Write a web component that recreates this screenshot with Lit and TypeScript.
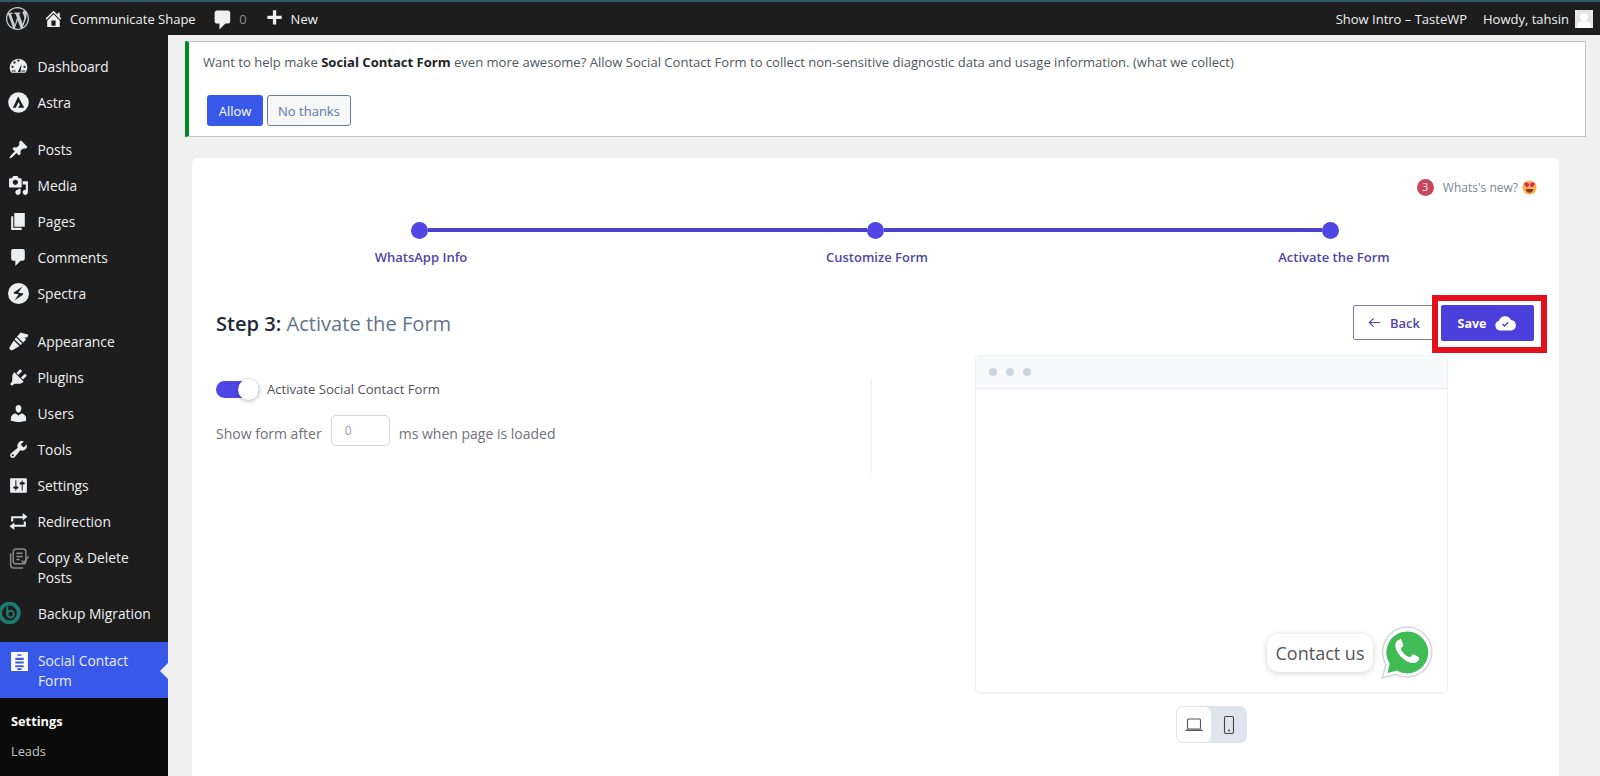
import { LitElement, html, css, svg } from "lit";
import { customElement } from "lit/decorators.js";

const W = "#eceff1";
const D = "#1d1d1d";
const icons: Record<string, any> = {
  dash: svg`<path d="M10 2.5a8.400 8.400 0 0 0-8.400 8.400c0 1.900.65 3.700 1.800 5.100h13.200a8.300 8.300 0 0 0 1.800-5.100A8.400 8.400 0 0 0 10 2.500z" fill="${W}"/><circle cx="4.300" cy="10.300" r="1.100" fill="${D}"/><circle cx="15.700" cy="10.300" r="1.100" fill="${D}"/><circle cx="6.200" cy="6.200" r="1.100" fill="${D}"/><circle cx="10" cy="4.400" r="1.100" fill="${D}"/><path d="M9.300 15.200 13 7.500l-1.200 8z" fill="${D}"/><path d="M3.700 14.300h3.600M12.800 14.300h3.500" stroke="${D}" stroke-width="1"/>`,
  astra: svg`<circle cx="10" cy="10" r="9.800" fill="${W}"/><path d="M9.700 4.300 4.600 15h2.800L10 9.600l1.400 2.800-1.900 2.600h6z" fill="${D}"/>`,
  pin: svg`<path d="M10.440 3.020l1.820-1.820 6.360 6.350-1.830 1.820c-1.050-.68-2.480-.57-3.410.36l-.75.75c-.92.93-1.040 2.350-.35 3.400l-1.830 1.820-2.410-2.410-2.800 2.790c-.42.42-3.380 2.710-3.800 2.290s1.860-3.390 2.280-3.810l2.790-2.790L4.100 9.360l1.830-1.820c1.050.69 2.480.57 3.400-.36l.75-.75c.93-.92 1.050-2.350.36-3.410z" fill="${W}"/>`,
  media: svg`<path d="M13 11V4c0-.55-.45-1-1-1h-1.670L9 1H5L3.670 3H2c-.55 0-1 .45-1 1v7c0 .55.45 1 1 1h10c.55 0 1-.45 1-1zM7 4.500c1.380 0 2.500 1.120 2.500 2.500S8.380 9.500 7 9.500 4.500 8.380 4.500 7 5.620 4.500 7 4.500zM14 6h5v10.500c0 1.380-1.120 2.500-2.500 2.500S14 17.880 14 16.500s1.120-2.500 2.500-2.500c.17 0 .34.02.5.05V9h-3V6zm-4 8.050V13h2v3.500c0 1.380-1.120 2.500-2.500 2.500S7 17.880 7 16.500 8.120 14 9.500 14c.17 0 .34.02.5.05z" fill="${W}"/>`,
  pages: svg`<path d="M6 15V2h10v13H6zm-1 1h8v2H3V5h2v11z" fill="${W}"/>`,
  comment: svg`<path d="M5 2h9c1.100 0 2 .9 2 2v7c0 1.100-.9 2-2 2h-2l-5 5v-5H5c-1.100 0-2-.9-2-2V4c0-1.100.9-2 2-2z" fill="${W}"/>`,
  spectra: svg`<circle cx="10" cy="10" r="10" fill="${W}"/><path d="M13.600 3.600 5.800 8.800c-.6.5-.4 1.300.3 1.400l4.100.6-3.800 5.600 7.800-5.200c.6-.5.4-1.300-.3-1.400l-4.100-.6z" fill="${D}"/>`,
  brush: svg`<path d="M19.500 3.500 12 1.500 8.500 5.500l6 5.500 2.800-3-1.600-2.200 2.500.7zM7.700 6.300 6.300 8l5.700 5.300 1.600-1.500zM5.500 9 1.500 15.500c-.8 1.800 1.300 3.600 3 2.500L11 14.200z" fill="${W}"/>`,
  plug: svg`<path d="M13.110 4.360L9.870 7.600 8 5.730l3.240-3.240c.35-.34 1.050-.2 1.560.32.52.51.66 1.210.31 1.550zm-8 1.770l.91-1.120 9.010 9.010-1.190.84c-.71.71-2.630 1.160-3.820 1.160H6.140L4.900 17.260c-.59.59-1.540.59-2.120 0-.59-.58-.59-1.530 0-2.120l1.240-1.240v-3.880c0-1.130.4-3.190 1.090-3.890zm7.260 3.970l3.240-3.240c.34-.35 1.040-.21 1.550.31.52.51.66 1.210.31 1.560l-3.240 3.250z" fill="${W}"/>`,
  user: svg`<path d="M10 9.250c-2.270 0-2.730-3.440-2.730-3.440C7 4.020 7.820 2 9.970 2c2.160 0 2.980 2.020 2.710 3.810 0 0-.41 3.440-2.680 3.440zm0 2.570L12.720 10c2.390 0 4.520 2.330 4.520 4.530v2.490s-3.650 1.130-7.240 1.130c-3.650 0-7.240-1.130-7.240-1.130v-2.490c0-2.250 1.940-4.480 4.470-4.480z" fill="${W}"/>`,
  wrench: svg`<path d="M16.680 9.770c-1.340 1.340-3.300 1.670-4.950.99l-5.410 6.520c-.99.99-2.590.99-3.570 0-.99-.98-.99-2.580 0-3.570l6.520-5.420c-.68-1.650-.35-3.610.99-4.950 1.280-1.280 3.120-1.620 4.720-1.060l-2.890 2.890 2.820 2.820 2.860-2.870c.53 1.580.18 3.390-1.090 4.650zM3.810 16.210c.4.39 1.040.39 1.430 0 .4-.4.4-1.040 0-1.430-.39-.4-1.030-.4-1.430 0-.39.39-.39 1.030 0 1.430z" fill="${W}"/>`,
  settings: svg`<path d="M18 16V4c0-.55-.45-1-1-1H3c-.55 0-1 .45-1 1v12c0 .55.45 1 1 1h14c.55 0 1-.45 1-1zM8 11h1c.55 0 1 .45 1 1s-.45 1-1 1H8v1.500c0 .28-.22.5-.5.5s-.5-.22-.5-.5V13H6c-.55 0-1-.45-1-1s.45-1 1-1h1V5.500c0-.28.22-.5.5-.5s.5.22.5.5V11zm5-2h-1c-.55 0-1-.45-1-1s.45-1 1-1h1V5.500c0-.28.22-.5.5-.5s.5.22.5.5V7h1c.55 0 1 .45 1 1s-.45 1-1 1h-1v5.500c0 .28-.22.5-.5.5s-.5-.22-.5-.5V9z" fill="${W}"/>`,
  redirect: svg`<path d="M3 5h11V2l4.500 3.500L14 9V7H5v3H3zM17 15H6v3l-4.500-3.500L6 11v2h9v-3h2z" fill="${W}"/>`,
  copy: svg`<g fill="none" stroke="#8a8a8a" stroke-width="1.400"><rect x="5" y="1" width="12" height="14" rx="2.500"/><path d="M2.500 5v11c0 2 1.500 3 3 3h9M8 5h6M8 8h6M8 11h3"/><path d="m13 12 2 2 4.500-6"/></g>`,
  backup: svg`<circle cx="9.500" cy="10" r="8.500" fill="none" stroke="#1f7a73" stroke-width="3.500"/><circle cx="10.500" cy="11" r="3" fill="none" stroke="#1f7a73" stroke-width="1.800"/><path d="M7.500 4v7" stroke="#1f7a73" stroke-width="1.800"/>`,
  form: svg`<path fill-rule="evenodd" d="M2 1h16v18H2zM8 3v1.500h4V3zM6 6.500v2h8v-2zM6 10v2h8v-2zM6 13.500v2h8v-2zM8 16.500V18h4v-1.500z" fill="#fff"/>`,
};
const ic = (k: string) => html`<svg class="ic" viewBox="0 0 20 20">${icons[k]}</svg>`;

const WP = "M20 10c0-5.510-4.490-10-10-10C4.480 0 0 4.490 0 10c0 5.520 4.480 10 10 10 5.510 0 10-4.480 10-10zM7.780 15.370L4.370 6.220c.55-.02 1.170-.08 1.170-.08.5-.06.44-1.130-.06-1.110 0 0-1.450.11-2.370.11-.18 0-.37 0-.58-.01C4.120 2.690 6.890 1.050 10 1.050c2.320 0 4.430.9 6.010 2.350-.67-.1-1.620.38-1.620 1.550 0 .72.44 1.330.9 2.070.35.62.55 1.380.55 2.490 0 1.490-1.410 5.020-1.410 5.020l-3.050-8.410c.54-.02.83-.17.83-.17.5-.05.44-1.250-.06-1.220 0 0-1.450.12-2.390.12-.87 0-2.330-.12-2.330-.12-.5-.03-.56 1.200-.06 1.220l.92.08 1.260 3.410zM17.410 10c.24-.64.74-1.870.43-4.250.7 1.290 1.050 2.710 1.050 4.250 0 3.290-1.730 6.240-4.400 7.780.97-2.590 1.940-5.200 2.920-7.780zM6.100 18.090C3.120 16.640 1.110 13.530 1.110 10c0-1.300.23-2.480.72-3.590C3.250 10.300 4.670 14.200 6.100 18.090zm4.030-6.630l2.580 6.980c-.85.3-1.790.46-2.710.46-.79 0-1.560-.1-2.290-.33.8-2.370 1.610-4.740 2.420-7.110z";

@customElement("app-root")
export class AppRoot extends LitElement {
  static styles = css`
    :host { display: block; width: 1600px; height: 776px; overflow: hidden; background: #f0f0f1; font-family: "Open Sans", "Noto Sans", sans-serif; color: #3c434a; }
    * { box-sizing: border-box; }
    .shell { display: flex; flex-direction: column; height: 776px; }
    .bar { flex: none; height: 35px; background: #1d1d1d; border-top: 2px solid #2d5c66; display: flex; align-items: center; color: #eef0f1; font-size: 13px; padding: 0 7px 0 6px; }
    .bar > * { flex: none; }
    .bar .wp { width: 23px; height: 23px; margin-right: 14px; }
    .bar .home { width: 21px; height: 21px; margin-right: 6px; }
    .bar .cm { width: 24px; height: 24px; margin-left: 15.5px; margin-right: 4px; margin-top: 2px; }
    .bar .zero { color: #8b8f92; margin-right: 16px; }
    .bar .plus { width: 22px; height: 22px; margin-right: 6px; }
    .sp { flex: 1 !important; }
    .bar .intro { margin-right: 16px; }
    .avatar { width: 18px; height: 18px; background: #e4e4e4; margin-left: 6px; position: relative; overflow: hidden; }
    .avatar i { position: absolute; left: 5px; top: 3px; width: 8px; height: 8px; border-radius: 50%; background: #fff; }
    .avatar b { position: absolute; left: 2px; top: 11px; width: 14px; height: 10px; border-radius: 6px 6px 0 0; background: #fff; }
    .main { flex: 1; display: flex; min-height: 0; }
    .side { flex: none; width: 168px; background: #1d1d1d; color: #f0f0f1; font-size: 13.8px; display: flex; flex-direction: column; padding-top: 13px; overflow: hidden; }
    .it { display: flex; align-items: center; height: 36px; padding-left: 8px; flex: none; }
    .it .ic { width: 21px; height: 21px; flex: none; margin-right: 8.5px; }
    .it.two { height: 56px; line-height: 19.5px; align-items: flex-start; padding-top: 9px; }
    .it.bk { padding-left: 0; }
    .it.bk .ic { margin-right: 17px; margin-left: -1px; width: 22px; height: 22px; }
    .gap { height: 12px; flex: none; }
    .gap.first { height: 11px; }
    .it.cur { background: #3858e9; color: #e8ecff; height: 56px; margin-top: 11px; position: relative; align-items: flex-start; padding-top: 9px; line-height: 20px; padding-left: 9px; }
    .it.cur .ic { margin-right: 8px; }
    .it.cur::after { content: ""; position: absolute; right: 0; top: 21px; border: 8px solid transparent; border-right-color: #f0f0f1; border-left: 0; }
    .sub { flex: 1; background: #0b0b0b; padding-top: 14px; font-size: 12.8px; }
    .sub div { padding-left: 11px; height: 30px; line-height: 18px; color: #c3c4c7; }
    .sub .on { color: #fff; font-weight: 700; }
    .content { flex: 1; min-width: 0; padding: 6px 0 0 17px; position: relative; }
    .notice { height: 96px; width: 1401px; background: #fff; border: 1px solid #c3c4c7; border-left: 4px solid #008a20; padding: 10px 14px; font-size: 13.06px; color: #50575e; }
    .notice b { color: #1d2327; }
    .notice p { margin: 0; line-height: 20px; }
    .btns { display: flex; gap: 4px; margin-top: 23px; margin-left: 4px; }
    .btn { height: 31px; border-radius: 3px; font-size: 13px; display: flex; align-items: center; justify-content: center; }
    .allow { width: 56px; background: #3858e9; color: #fff; }
    .no { width: 84px; background: #f6f7f7; border: 1px solid #6b7ba8; color: #5f71a8; }
    .card { width: 1367px; margin: 21px 0 0 7px; height: 640px; background: #fff; border-radius: 6px; padding: 0 22px 0 24px; position: relative; }
    .news { display: flex; justify-content: flex-end; align-items: center; gap: 9px; padding-top: 19px; height: 39px; font-size: 12px; color: #7b8794; }
    .news i { width: 17px; height: 17px; border-radius: 50%; background: #c8475c; color: #f8e6e6; font-style: normal; font-size: 10.5px; display: flex; align-items: center; justify-content: center; }
    .news svg { width: 15px; height: 15px; margin-left: -5px; }
    .stepper { height: 20px; margin: 23px 0 0 195px; width: 928px; display: flex; align-items: center; }
    .line { flex: 1; height: 3.5px; background: #4a3fcf; }
    .dot { width: 17px; height: 17px; border-radius: 50%; background: #4f46e5; flex: none; }
    .labels { position: relative; margin-top: 8px; height: 20px; font-size: 13px; font-weight: 600; color: #4f46a8; }
    .labels span { position: absolute; white-space: nowrap; transform: translateX(-50%); }
    .head { display: flex; align-items: flex-start; justify-content: space-between; margin-top: 37px; height: 36px; }
    .h { font-size: 20.1px; line-height: 38px; color: #64748b; font-weight: 400; }
    .h b { font-weight: 600; color: #1e293b; }
    .acts { display: flex; align-items: flex-start; }
    .back { width: 88px; height: 35px; border: 1px solid #7c78a8; border-radius: 2px; display: flex; align-items: center; justify-content: center; gap: 9px; color: #4f46a8; font-size: 13px; font-weight: 600; margin-right: -9px; padding-right: 6px; }
    .back svg { width: 13px; height: 13px; }
    .savewrap { border: 6px solid #e3101c; padding: 4px 7px 6px 3px; background: #fff; position: relative; margin: -10px -10px -12px 0; }
    .save { width: 93px; height: 36px; background: #4a3fdb; border-radius: 2px; color: #fff; font-size: 12.5px; font-weight: 700; display: flex; align-items: center; justify-content: center; gap: 8px; }
    .save svg { width: 23px; height: 16px; }
    .body { display: flex; margin-top: 11px; }
    .left { width: 655px; padding-top: 25px; flex: none; }
    .divider { flex: none; width: 1px; height: 94px; margin-top: 28px; border-left: 1px dotted #e4e6ea; }
    .toggle { display: flex; align-items: center; font-size: 13.1px; color: #52525b; height: 24px; gap: 8px; }
    .sw { width: 43px; height: 17px; background: #4f46e5; border-radius: 9px; position: relative; }
    .sw i { position: absolute; right: 0; top: -2px; width: 21px; height: 21px; border-radius: 50%; background: #fff; box-shadow: 0 1px 4px rgba(0,0,0,.3); }
    .after { display: flex; align-items: center; margin-top: 14px; font-size: 14px; color: #71717a; gap: 9px; }
    .after .inp { width: 59px; height: 31px; border: 1px solid #d4d8de; border-radius: 5px; font-size: 12px; color: #a1a1aa; padding-left: 13px; line-height: 29px; margin-bottom: 5px; }
    .preview { flex: none; margin-left: 103px; margin-top: 3px; display: flex; flex-direction: column; align-items: center; }
    .frame { width: 473px; height: 338px; border: 1px solid #eef0f3; border-radius: 5px; box-shadow: 0 1px 2px rgba(0,0,0,.05); position: relative; }
    .chrome { height: 33px; background: #f8f9fb; border-bottom: 1px solid #e7e9ee; display: flex; align-items: center; gap: 9px; padding-left: 13px; }
    .chrome i { width: 8px; height: 8px; border-radius: 50%; background: #cbd5e1; }
    .wa { position: absolute; right: 13px; bottom: 13px; display: flex; align-items: center; gap: 8px; }
    .wa .lbl { height: 38px; width: 106px; background: #fff; border-radius: 12px; box-shadow: 0 1px 6px rgba(0,0,0,.18); font-size: 18px; color: #555; display: flex; align-items: center; justify-content: center; }
    .wa svg { width: 53px; height: 53px; }
    .dev { display: flex; width: 71px; height: 37px; margin-top: 13px; background: #dfe5ee; border-radius: 7px; padding: 1px; }
    .dev div { flex: 1; display: flex; align-items: center; justify-content: center; border-radius: 6px; }
    .dev .act { background: #fff; flex: none; width: 34px; }
    .dev svg { width: 20px; height: 20px; }
  `;

  render() {
    const a = (k: string, t: string) => html`<div class="it">${ic(k)}<span>${t}</span></div>`;
    return html`<div class="shell">
      <div class="bar">
        <svg class="wp" viewBox="0 0 20 20"><path d=${WP} fill="#c9ccce"/></svg>
        <svg class="home" viewBox="0 0 20 20"><path d="M16 8.500l1.530 1.530-1.060 1.060L10 4.620l-6.470 6.470-1.060-1.060L10 2.500l4 4v-2h2v4zm-6-2.460l6 5.990V18H4v-5.970zM12 17v-5H8v5h4z" fill="#f0f0f1"/></svg>
        <span>Communicate Shape</span>
        <svg class="cm" viewBox="0 0 20 20"><path d="M5 2h9c1.100 0 2 .9 2 2v7c0 1.100-.9 2-2 2h-2l-5 5v-5H5c-1.100 0-2-.9-2-2V4c0-1.100.9-2 2-2z" fill="#f0f0f1"/></svg>
        <span class="zero">0</span>
        <svg class="plus" viewBox="0 0 20 20"><path d="M17 7v3h-5v5H9v-5H4V7h5V2h3v5h5z" fill="#f0f0f1"/></svg>
        <span>New</span>
        <span class="sp"></span>
        <span class="intro">Show Intro – TasteWP</span>
        <span>Howdy, tahsin</span>
        <span class="avatar"><i></i><b></b></span>
      </div>
      <div class="main">
        <nav class="side">
          ${a("dash", "Dashboard")}${a("astra", "Astra")}
          <div class="gap first"></div>
          ${a("pin", "Posts")}${a("media", "Media")}${a("pages", "Pages")}${a("comment", "Comments")}${a("spectra", "Spectra")}
          <div class="gap"></div>
          ${a("brush", "Appearance")}${a("plug", "Plugins")}${a("user", "Users")}${a("wrench", "Tools")}${a("settings", "Settings")}${a("redirect", "Redirection")}
          <div class="it two">${ic("copy")}<span>Copy &amp; Delete<br />Posts</span></div>
          <div class="it bk">${ic("backup")}<span>Backup Migration</span></div>
          <div class="it cur">${ic("form")}<span>Social Contact<br />Form</span></div>
          <div class="sub"><div class="on">Settings</div><div>Leads</div><div>Agents</div></div>
        </nav>
        <div class="content">
          <div class="notice">
            <p>Want to help make <b>Social Contact Form</b> even more awesome? Allow Social Contact Form to collect non-sensitive diagnostic data and usage information. (what we collect)</p>
            <div class="btns"><div class="btn allow">Allow</div><div class="btn no">No thanks</div></div>
          </div>
          <div class="card">
            <div class="news"><i>3</i><span>Whats's new?</span>
              <svg viewBox="0 0 20 20"><circle cx="10" cy="10" r="9.500" fill="#f6b352"/><path d="M5.500 3c-2.500 0-3.500 3-1 5l2.500 2 2-2.500C10 5 8 3 6.500 4zM14.500 3c2.500 0 3.500 3 1 5L13 10l-2-2.500C10 5 12 3 13.500 4z" fill="#e0245e"/><path d="M5 12h10c0 3-2.500 5-5 5s-5-2-5-5z" fill="#8a3a1c"/></svg>
            </div>
            <div class="stepper"><div class="dot"></div><div class="line"></div><div class="dot"></div><div class="line"></div><div class="dot"></div></div>
            <div class="labels">
              <span style="left:205px">WhatsApp Info</span>
              <span style="left:661px">Customize Form</span>
              <span style="left:1118px">Activate the Form</span>
            </div>
            <div class="head">
              <div class="h"><b>Step 3:</b> Activate the Form</div>
              <div class="acts">
                <div class="back"><svg viewBox="0 0 14 14"><path d="M13 7H2M6 2.500 1.500 7 6 11.500" fill="none" stroke="#4f46a8" stroke-width="1.300"/></svg>Back</div>
                <div class="savewrap"><div class="save">Save
                  <svg viewBox="0 0 23 16"><path d="M6 15.500a5 5 0 0 1-1-9.800A6.500 6.500 0 0 1 17 5a5.300 5.300 0 0 1 .5 10.500z" fill="#fff"/><path d="m8.500 9 2 2 3.800-3.800" fill="none" stroke="#4a3fdb" stroke-width="1.300"/></svg>
                </div></div>
              </div>
            </div>
            <div class="body">
              <div class="left">
                <div class="toggle"><div class="sw"><i></i></div><span>Activate Social Contact Form</span></div>
                <div class="after"><span>Show form after</span><div class="inp">0</div><span>ms when page is loaded</span></div>
              </div>
              <div class="divider"></div>
              <div class="preview">
                <div class="frame">
                  <div class="chrome"><i></i><i></i><i></i></div>
                  <div class="wa"><div class="lbl">Contact us</div>
                    <svg viewBox="1 1 52 52"><path d="M27 2a24.500 24.500 0 0 0-21 37L2 52l13.500-3.500A24.500 24.500 0 1 0 27 2z" fill="#fff" stroke="#d5d8da" stroke-width="1.500"/><path d="M27 6.500A20.500 20.500 0 0 0 9.500 38L7.500 47l9-2.300A20.500 20.500 0 1 0 27 6.500z" fill="#3fbc54"/><path d="M19.500 14.500c-1 0-2.500.4-3.500 2-1.300 2-1.500 5 .5 9 2.300 4.800 7.500 9.500 12 11 3.500 1.200 6 1 8-.5 1.500-1.200 2-3 1.800-4.200-.1-.6-4.700-3-5.800-3.200-.8-.1-2.300 2.800-3 2.900-1.500.1-4.500-1.700-6.300-3.700-1.500-1.700-2.800-3.800-2.700-4.800.1-.8 2.500-2 2.400-3.200-.1-1-2-5.800-2.600-6.200-.5-.1-.5-.1-.8-.1z" fill="#fff"/></svg>
                  </div>
                </div>
                <div class="dev">
                  <div class="act"><svg viewBox="0 0 20 20"><rect x="3.500" y="4" width="13" height="10" rx="1" fill="none" stroke="#555" stroke-width="1.100"/><path d="M1.500 15.300h17" stroke="#555" stroke-width="1.400"/></svg></div>
                  <div><svg viewBox="0 0 20 20"><rect x="5.500" y="1.500" width="9" height="17" rx="1.500" fill="none" stroke="#444" stroke-width="1.100"/><circle cx="10" cy="15.500" r=".9" fill="#333"/></svg></div>
                </div>
              </div>
            </div>
          </div>
        </div>
      </div>
    </div>`;
  }
}
